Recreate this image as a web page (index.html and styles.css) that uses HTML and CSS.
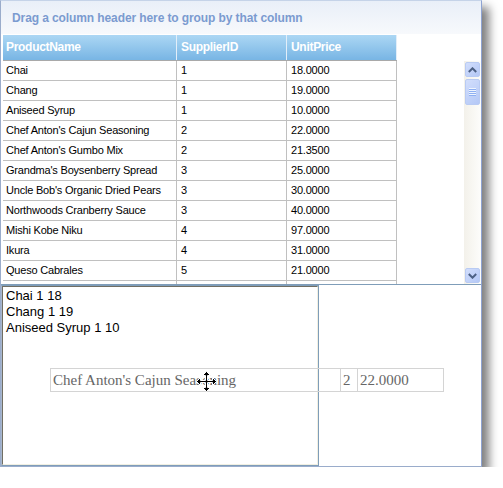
FILE: index.html
```html
<!DOCTYPE html>
<html>
<head>
<meta charset="utf-8">
<link rel="stylesheet" href="styles.css">
</head>
<body>
<div class="window">
  <div class="group-panel">Drag a column header here to group by that column</div>
  <div class="grid-area">
    <div class="grid">
      <div class="row header">
        <div class="cell c1">ProductName</div><div class="cell c2">SupplierID</div><div class="cell c3">UnitPrice</div>
      </div>
      <div class="row"><div class="cell c1">Chai</div><div class="cell c2">1</div><div class="cell c3">18.0000</div></div>
      <div class="row"><div class="cell c1">Chang</div><div class="cell c2">1</div><div class="cell c3">19.0000</div></div>
      <div class="row"><div class="cell c1">Aniseed Syrup</div><div class="cell c2">1</div><div class="cell c3">10.0000</div></div>
      <div class="row"><div class="cell c1">Chef Anton's Cajun Seasoning</div><div class="cell c2">2</div><div class="cell c3">22.0000</div></div>
      <div class="row"><div class="cell c1">Chef Anton's Gumbo Mix</div><div class="cell c2">2</div><div class="cell c3">21.3500</div></div>
      <div class="row"><div class="cell c1">Grandma's Boysenberry Spread</div><div class="cell c2">3</div><div class="cell c3">25.0000</div></div>
      <div class="row"><div class="cell c1">Uncle Bob's Organic Dried Pears</div><div class="cell c2">3</div><div class="cell c3">30.0000</div></div>
      <div class="row"><div class="cell c1">Northwoods Cranberry Sauce</div><div class="cell c2">3</div><div class="cell c3">40.0000</div></div>
      <div class="row"><div class="cell c1">Mishi Kobe Niku</div><div class="cell c2">4</div><div class="cell c3">97.0000</div></div>
      <div class="row"><div class="cell c1">Ikura</div><div class="cell c2">4</div><div class="cell c3">31.0000</div></div>
      <div class="row"><div class="cell c1">Queso Cabrales</div><div class="cell c2">5</div><div class="cell c3">21.0000</div></div>
      <div class="row"><div class="cell c1"></div><div class="cell c2"></div><div class="cell c3"></div></div>
    </div>
    <div class="vscroll">
      <div class="sb-btn">
        <svg width="9" height="6" viewBox="0 0 9 6"><path d="M0.8 5 L4.5 1.3 L8.2 5" fill="none" stroke="#4d6185" stroke-width="2"/></svg>
      </div>
      <div class="sb-thumb">
        <svg width="7" height="8" viewBox="0 0 7 8"><path d="M0 0.5H7M0 2.5H7M0 4.5H7M0 6.5H7" stroke="#eef4fe" stroke-width="1"/><path d="M0 1.5H7M0 3.5H7M0 5.5H7M0 7.5H7" stroke="#8fb0f2" stroke-width="1"/></svg>
      </div>
      <div class="sb-track"></div>
      <div class="sb-btn">
        <svg width="9" height="6" viewBox="0 0 9 6"><path d="M0.8 1 L4.5 4.7 L8.2 1" fill="none" stroke="#4d6185" stroke-width="2"/></svg>
      </div>
    </div>
  </div>
  <div class="bottom">
    <div class="textbox">
      <div class="textbox-inner">Chai 1 18<br>Chang 1 19<br>Aniseed Syrup 1 10</div>
    </div>
  </div>
  <div class="drag-ghost">
    <div class="g1">Chef Anton's Cajun Seasoning</div><div class="g2">2</div><div class="g3">22.0000</div>
  </div>
  <svg class="move-cursor" width="21" height="21" viewBox="0 0 21 21"><path d="M10.5 0.5 L14.5 4.5 L11.5 4.5 L11.5 9.5 L16.5 9.5 L16.5 6.5 L20.5 10.5 L16.5 14.5 L16.5 11.5 L11.5 11.5 L11.5 16.5 L14.5 16.5 L10.5 20.5 L6.5 16.5 L9.5 16.5 L9.5 11.5 L4.5 11.5 L4.5 14.5 L0.5 10.5 L4.5 6.5 L4.5 9.5 L9.5 9.5 L9.5 4.5 L6.5 4.5 Z" fill="#000" stroke="#fff" stroke-width="1"/></svg>
</div>
</body>
</html>
```
FILE: styles.css
```css
html, body {
  margin: 0;
  padding: 0;
  background: #ffffff;
}

.window {
  position: relative;
  box-sizing: border-box;
  width: 482px;
  height: 467px;
  border: 1px solid #9aaccb;
  border-top-color: #c5d3e8;
  border-right-color: #8ea3d2;
  background: #ffffff;
  box-shadow: 7px 7px 9px rgba(0, 0, 0, 0.5);
  display: flex;
  flex-direction: column;
  font-family: "Liberation Sans", Arial, sans-serif;
}

.group-panel {
  height: 33px;
  border-bottom: 1px solid #ffffff;
  background: linear-gradient(#e9eff8, #f7f9fc);
  color: #7b9bd0;
  font-weight: bold;
  font-size: 12px;
  line-height: 34px;
  padding-left: 11px;
  letter-spacing: -0.1px;
  white-space: nowrap;
}

.grid-area {
  height: 249px;
  display: flex;
  overflow: hidden;
}

.grid {
  padding-left: 2px;
  width: 394px;
}

.row {
  display: flex;
  height: 20px;
  box-sizing: border-box;
  border-bottom: 1px solid #c0c0c0;
  font-size: 11px;
  color: #000;
}

.cell {
  box-sizing: border-box;
  border-right: 1px solid #c0c0c0;
  padding-left: 4px;
  line-height: 19px;
  white-space: nowrap;
  overflow: hidden;
  letter-spacing: -0.2px;
}

.c1 { width: 174px; padding-left: 3px; }
.c2 { width: 110px; }
.c3 { width: 110px; }

.row.header {
  height: 26px;
  border-bottom: 1px solid #a9a9a9;
  background: linear-gradient(#acd7f4, #78b5e4);
  color: #ffffff;
  font-weight: bold;
  font-size: 12px;
}

.row.header .cell {
  border-right-color: #e2eef9;
  line-height: 25px;
  letter-spacing: -0.3px;
}

.vscroll {
  margin-left: auto;
  margin-top: 26px;
  width: 17px;
  height: 223px;
  display: flex;
  flex-direction: column;
  background: linear-gradient(90deg, #f3f1ea, #fdfdfb);
}

.sb-btn,
.sb-thumb {
  box-sizing: border-box;
  margin: 1px;
  width: 15px;
  border: 1px solid #b9cbf3;
  border-radius: 2px;
  background: linear-gradient(135deg, #d2defc, #b4c8f6);
  display: flex;
  align-items: center;
  justify-content: center;
}

.sb-btn {
  height: 15px;
}

.sb-thumb {
  height: 26px;
}

.sb-track {
  flex: 1;
}

.bottom {
  border-top: 1px solid #7f9db9;
  flex: 1;
  display: flex;
}

.textbox {
  box-sizing: border-box;
  width: 318px;
  height: 100%;
  border: 1px solid #7f9db9;
  border-left-color: #a8b6cc;
}

.textbox-inner {
  box-sizing: border-box;
  height: 100%;
  border: 1px solid #716f64;
  border-right-color: #f1efe2;
  border-bottom-color: #f1efe2;
  padding: 1px 3px;
  font-size: 13px;
  line-height: 16px;
  color: #000;
}

.drag-ghost {
  position: absolute;
  left: 49px;
  top: 367px;
  width: 394px;
  height: 24px;
  box-sizing: border-box;
  border: 1px solid #d4d4d4;
  display: flex;
  font-family: "Liberation Serif", "Times New Roman", serif;
  font-size: 15px;
  line-height: 22px;
  color: #666666;
}

.drag-ghost > div {
  box-sizing: border-box;
  white-space: nowrap;
  overflow: hidden;
}

.g1 { width: 290px; border-right: 1px solid #d4d4d4; padding-left: 2px; }
.g2 { width: 17px; border-right: 1px solid #d4d4d4; padding-left: 2px; }
.g3 { width: 85px; padding-left: 2px; }

.move-cursor {
  position: absolute;
  left: 195px;
  top: 370px;
}
```
